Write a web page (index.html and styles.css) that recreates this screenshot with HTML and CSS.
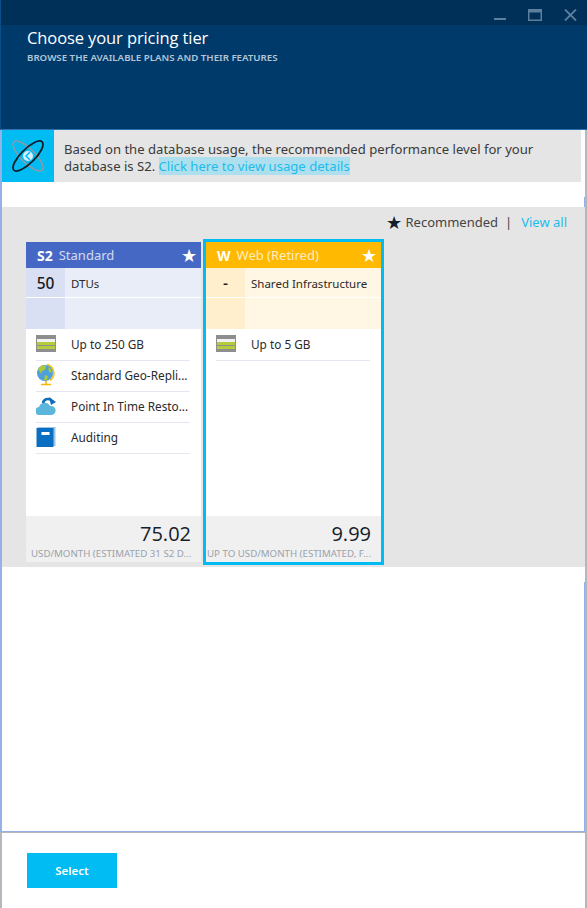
FILE: index.html
```html
<!DOCTYPE html>
<html>
<head>
  <meta name="viewport" content="width=device-width, initial-scale=1" />
  <title>Choose your pricing tier</title>
  <link rel="stylesheet" href="styles.css">
</head>
<body>
  <div class="header">
    <div class="window-bar">
      <svg class="window-btn" width="12" height="12" viewBox="0 0 12 12"><rect x="0" y="9" width="12" height="2" fill="#5c7f9e"/></svg>
      <svg class="window-btn" width="14" height="12" viewBox="0 0 14 12"><rect x="0.75" y="0.75" width="12.5" height="10.5" fill="none" stroke="#5c7f9e" stroke-width="1.5"/><rect x="1" y="1" width="12" height="2.500" fill="#5c7f9e"/></svg>
      <svg class="window-btn" width="13" height="12" viewBox="0 0 13 12"><path d="M1 0.500l11 11M12 0.500L1 11.500" stroke="#5c7f9e" stroke-width="1.800" fill="none"/></svg>
    </div>
    <h1>Choose your pricing tier</h1>
    <div class="subtitle">BROWSE THE AVAILABLE PLANS AND THEIR FEATURES</div>
  </div>

  <div class="blade">
    <div class="content">
      <div class="notice">
        <div class="notice-icon">
          <svg width="40" height="40" viewBox="0 0 40 40">
            <ellipse cx="20" cy="20" rx="20" ry="7" transform="rotate(45 20 20)" fill="none" stroke="#8a9aa6" stroke-width="1.600"/>
            <ellipse cx="20" cy="20" rx="20" ry="7" transform="rotate(-45 20 20)" fill="none" stroke="#10202c" stroke-width="1.800"/>
            <circle cx="20" cy="20" r="5" fill="#d6f1fb"/>
            <path d="M22 16l-4 4 4 4" stroke="#00bcf2" stroke-width="1.500" fill="none"/>
          </svg>
        </div>
        <p>Based on the database usage, the recommended performance level for your database is S2. <a href="#">Click here to view usage details</a></p>
      </div>
      <div class="notice-gap"></div>

      <div class="tiers">
        <div class="tiers-top">
          <span class="star-dark">★</span>
          <span>Recommended</span>
          <span class="sep">|</span>
          <a href="#">View all</a>
        </div>
        <div class="cards">
          <div class="card standard">
            <div class="card-head"><b>S2</b><span class="plan-name">Standard</span><span class="star">★</span></div>
            <div class="spec"><div class="spec-num">50</div><div class="spec-text">DTUs</div></div>
            <div class="spec spec-empty"><div class="spec-num"></div><div class="spec-text"></div></div>
            <ul class="features">
              <li>
                <svg width="20" height="18" viewBox="0 0 20 18"><rect width="20" height="17" fill="#8e8e8e"/><rect x="1" y="4" width="18" height="3" fill="#f0f0f0"/><rect x="1" y="7" width="18" height="3" fill="#b5cc3c"/><rect x="1" y="11" width="18" height="3" fill="#b5cc3c"/></svg>
                <span>Up to 250 GB</span>
              </li>
              <li>
                <svg width="20" height="22" viewBox="0 0 20 22"><path d="M11 0.500a9 9 0 0 1 3 16" fill="none" stroke="#f5c518" stroke-width="1.800"/><circle cx="9" cy="9" r="8" fill="#4f9fd8"/><path d="M2 5l4-4 4 1-1 4-3 1-1 3zM9 11l3 1-1 4-3 0zM12 3l3 2 1 4-3-1z" fill="#a9c83c"/><path d="M10 17v3M5 20.500h10" stroke="#f5b800" stroke-width="1.600" fill="none"/></svg>
                <span>Standard Geo-Repli...</span>
              </li>
              <li>
                <svg width="20" height="18" viewBox="0 0 20 18"><path d="M4 18a4 4 0 0 1-1-8a6 6 0 0 1 11-1a4.500 4.500 0 0 1 2 9z" fill="#5cb6dc"/><path d="M7 6a5 5 0 0 1 8-3" fill="none" stroke="#0f6cb8" stroke-width="2.500"/><path d="M13 0l7 5-5 3z" fill="#0f6cb8"/></svg>
                <span>Point In Time Resto...</span>
              </li>
              <li>
                <svg width="19" height="20" viewBox="0 0 19 20"><rect x="1" y="0" width="18" height="19" fill="#9cc4e4"/><rect x="0" y="1" width="17" height="19" fill="#0a6fc2"/><rect x="5" y="5" width="8" height="3" fill="#fff"/></svg>
                <span>Auditing</span>
              </li>
            </ul>
            <div class="card-foot">
              <div class="price">75.02</div>
              <div class="price-note">USD/MONTH (ESTIMATED 31 S2 D...</div>
            </div>
          </div>

          <div class="card web selected">
            <div class="card-head"><b>W</b><span class="plan-name">Web (Retired)</span><span class="star">★</span></div>
            <div class="spec"><div class="spec-num spec-dash">-</div><div class="spec-text">Shared Infrastructure</div></div>
            <div class="spec spec-empty"><div class="spec-num"></div><div class="spec-text"></div></div>
            <ul class="features">
              <li>
                <svg width="20" height="18" viewBox="0 0 20 18"><rect width="20" height="17" fill="#8e8e8e"/><rect x="1" y="4" width="18" height="3" fill="#f0f0f0"/><rect x="1" y="7" width="18" height="3" fill="#b5cc3c"/><rect x="1" y="11" width="18" height="3" fill="#b5cc3c"/></svg>
                <span>Up to 5 GB</span>
              </li>
            </ul>
            <div class="card-foot">
              <div class="price">9.99</div>
              <div class="price-note">UP TO USD/MONTH (ESTIMATED, F...</div>
            </div>
          </div>
        </div>
      </div>
      <div class="empty"></div>
    </div>

    <div class="footer">
      <button>Select</button>
    </div>
  </div>
</body>
</html>
```

FILE: styles.css
```css
* {
  box-sizing: border-box;
}
body {
  font-family: "Noto Sans", "Open Sans", sans-serif;
  margin: 0;
  width: 587px;
  height: 908px;
  background: white;
  color: #2a2a2a;
  overflow: hidden;
}
a {
  color: #1cbcec;
  text-decoration: none;
}

.header {
  height: 130px;
  background: #003a6b;
  border-left: 1px solid #0b4f8a;
  border-bottom: 1px solid #2a6fb0;
  color: white;
}
.window-bar {
  height: 25px;
  background: #002f57;
  display: flex;
  justify-content: flex-end;
  align-items: center;
  gap: 22px;
  padding: 5px 10px 0 0;
}
h1 {
  font-family: "Open Sans", sans-serif;
  font-size: 16.500px;
  font-weight: 400;
  line-height: 24px;
  margin: 1px 0 0 26px;
  letter-spacing: -0.1px;
}
.subtitle {
  font-size: 9.700px;
  font-weight: 600;
  color: #b4c6d6;
  margin: 2px 0 0 26px;
  line-height: 11px;
}

.blade {
  height: 778px;
  border-right: 2px solid #b4b8bc;
}
.content {
  height: 702px;
  display: flex;
  flex-direction: column;
  border-left: 2px solid #94b2e6;
  border-bottom: 1px solid #94b2e6;
}
.notice {
  display: flex;
  height: 52px;
  width: 579px;
  background: #e5e5e5;
}
.notice-icon {
  width: 52px;
  background: #00bcf2;
  display: flex;
  align-items: center;
  justify-content: center;
  flex-shrink: 0;
}
.notice p {
  margin: 0;
  padding: 11px 20px 0 10px;
  font-size: 13.100px;
  line-height: 17px;
  color: #3a3a3a;
}
.notice a {
  background: #addfee;
}
.notice-gap {
  height: 25px;
  background: linear-gradient(#94b2e6, #94b2e6) no-repeat right bottom / 1px 10px;
}

.tiers {
  height: 360px;
  background: #e5e5e5;
}
.tiers-top {
  height: 32px;
  display: flex;
  justify-content: flex-end;
  align-items: center;
  font-size: 13px;
  color: #444;
  padding: 0 18px 2px 0;
}
.star-dark {
  font-size: 18px;
  line-height: 20px;
  color: #10202c;
  margin-right: 3px;
}
.sep {
  margin: 0 9px 0 7px;
}
.cards {
  display: flex;
  padding-left: 24px;
  gap: 2px;
}
.card {
  width: 175px;
  height: 320px;
  margin-top: 3px;
  background: white;
  display: flex;
  flex-direction: column;
}
.card.selected {
  width: 181px;
  height: 326px;
  margin-top: 0;
  border: 3px solid #00bcf2;
}
.card-head {
  height: 26px;
  display: flex;
  align-items: center;
  color: white;
  padding: 0 4px 0 11px;
  font-size: 13px;
}
.card-head b {
  font-size: 14px;
  margin-right: 6px;
}
.plan-name {
  opacity: 0.75;
  flex: 1;
}
.star {
  font-size: 18px;
  line-height: 20px;
}
.spec {
  height: 30px;
  display: flex;
  border-bottom: 1px solid white;
}
.spec-empty {
  height: 31px;
  border-bottom: 0;
}
.spec-num {
  width: 39px;
  text-align: center;
  font-size: 15.500px;
  font-weight: 500;
  line-height: 31px;
  color: #1a1a1a;
}
.spec-text {
  flex: 1;
  font-size: 11.500px;
  line-height: 31px;
  padding-left: 6px;
  white-space: nowrap;
}
.standard .card-head {
  background: #4668c5;
}
.standard .spec {
  background: #e9edf8;
}
.standard .spec-num {
  background: #d9e0f3;
}
.web .card-head {
  background: #ffb900;
}
.web .spec {
  background: #fff6e3;
}
.web .spec-num {
  background: #ffefcc;
}
.features {
  list-style: none;
  margin: 0;
  padding: 1px 11px 0 10px;
  flex: 1;
}
.features li {
  height: 31px;
  display: flex;
  align-items: center;
  font-size: 11.800px;
  padding-bottom: 2px;
  border-bottom: 1px solid #e6e6f0;
  white-space: nowrap;
}
.features svg {
  width: 20px;
  margin-right: 15px;
  flex-shrink: 0;
}
.card-foot {
  height: 46px;
  background: #f0f0f0;
  text-align: right;
  padding: 4px 10px 0 5px;
}
.price {
  font-family: "Open Sans", sans-serif;
  font-size: 20px;
  line-height: 28px;
  color: #16202a;
}
.price-note {
  font-size: 9.700px;
  line-height: 11px;
  color: #9aa2ac;
  text-align: left;
  white-space: nowrap;
}
.selected .card-foot {
  padding: 4px 10px 0 1px;
}

.empty {
  flex: 1;
  margin-top: 15px;
  border-right: 1px solid #94b2e6;
}

.footer {
  height: 76px;
  padding: 20px 0 0 25px;
  border-top: 1px solid #b4b8bc;
  border-left: 2px solid #b4b8bc;
}
button {
  width: 90px;
  height: 35px;
  border: none;
  background: #00bcf2;
  color: white;
  font-family: "Noto Sans", sans-serif;
  font-size: 11.500px;
  font-weight: 600;
}
```
